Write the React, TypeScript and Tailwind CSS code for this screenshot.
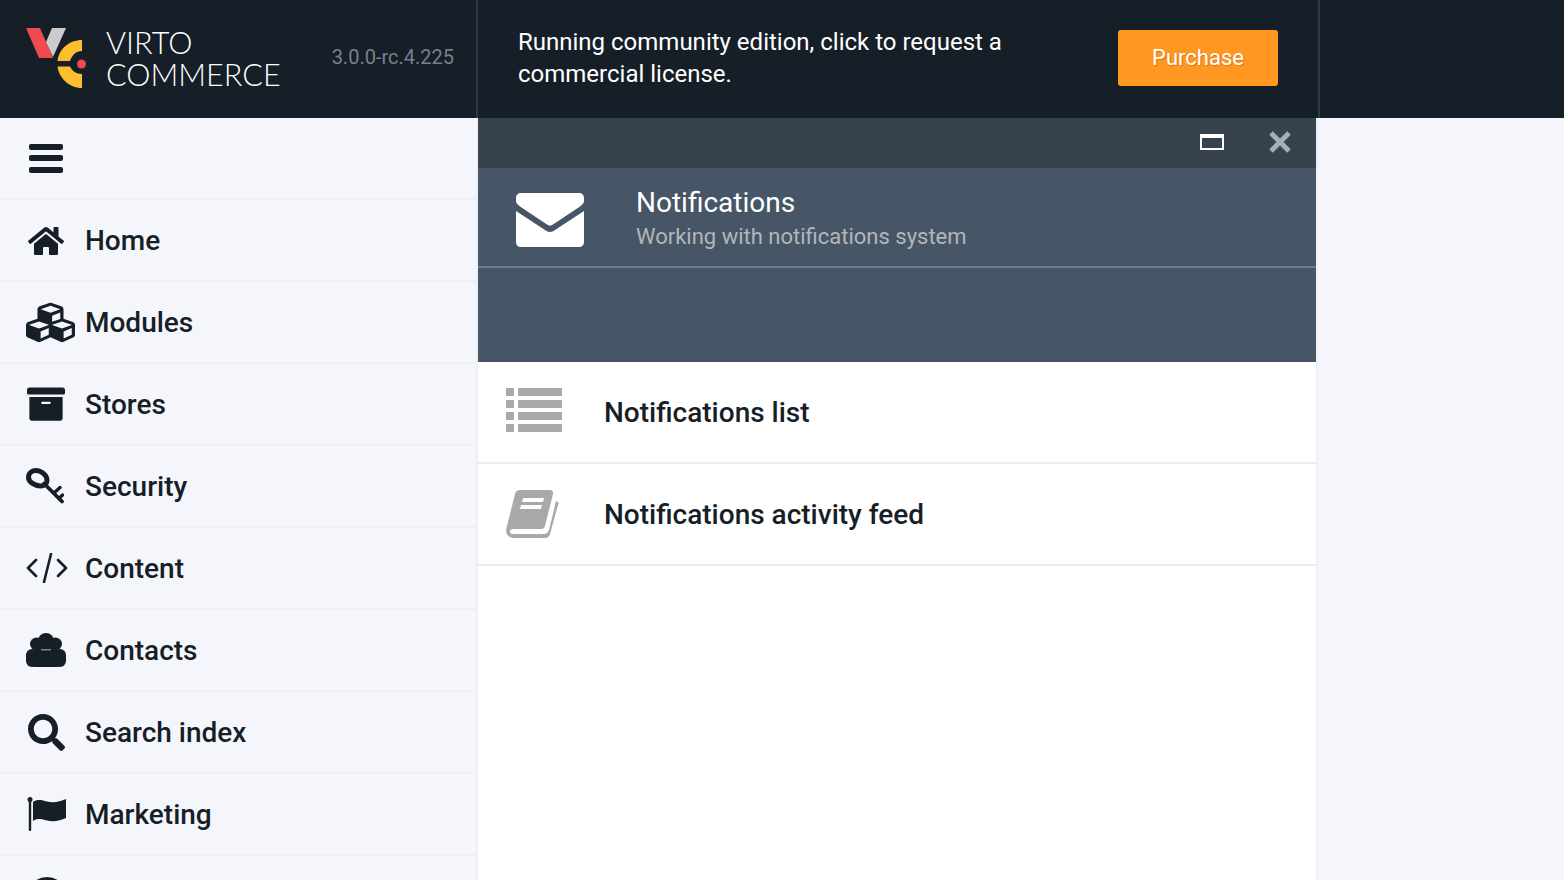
import { FaHome, FaCubes, FaArchive, FaSearch } from "react-icons/fa";
import type { ReactNode } from "react";

const dark = "#161e27";

function Logo() {
  return (
    <svg width="60" height="62" viewBox="0 0 60 62" className="-mr-[2px] shrink-0">
      <path d="M0 0H14L27 30H13Z" fill="#ef4a50" />
      <path d="M26 0H40L27 29L20 14Z" fill="#cbcbcb" />
      <path d="M56 12V23C50 23 46 27 44 33H31.500C33 21 43 12 56 12Z" fill="#fbbe2e" />
      <path d="M31.500 38.500H44C46 43 50 46 56 46V60C43 60 33 50 31.500 38.500Z" fill="#fbbe2e" />
      <circle cx="55.500" cy="36" r="4.500" fill="#ef4a50" />
    </svg>
  );
}

function KeyIcon() {
  return (
    <svg width="38" height="36" viewBox="0 0 38 36" fill="none" stroke={dark} strokeLinecap="round" strokeLinejoin="round">
      <path d="M2.500 9.500C2.500 5 6 2.500 10 2.500C15 2.500 21 7 21 12.500C21 16 18 18 14.500 18C9 18 2.500 14 2.500 9.500Z" strokeWidth="5" />
      <path d="M18 15.500L36 33.500" strokeWidth="3.800" />
      <path d="M28 25L34 19.500M33 30.500L36.500 27" strokeWidth="3.400" />
    </svg>
  );
}

function ContactsIcon() {
  return (
    <svg width="40" height="34" viewBox="0 0 40 34" fill={dark}>
      <circle cx="20" cy="8" r="8" />
      <circle cx="10.500" cy="11" r="6.500" />
      <circle cx="29.500" cy="11" r="6.500" />
      <rect x="8" y="10" width="24" height="7" />
      <rect x="0" y="16" width="12" height="18" rx="6" />
      <rect x="28" y="16" width="12" height="18" rx="6" />
      <rect x="6" y="18" width="28" height="16" rx="3" />
      <rect x="9" y="14" width="22" height="6" />
      <path d="M15 16.800H25" stroke="#f4f6fb" strokeWidth="0.700" />
    </svg>
  );
}

function FlagIcon() {
  return (
    <svg width="40" height="34" viewBox="0 0 40 34" fill={dark} className="ml-[1px]">
      <circle cx="3" cy="2.500" r="2.500" />
      <rect x="1.800" y="3" width="2.400" height="31" rx="1" />
      <path d="M6 5C10 2 15 3 20 4.500C26 6 33 5 39 2V21C33 24 26 25 20 23.500C15 22 10 21 6 24Z" />
    </svg>
  );
}

function CodeIcon() {
  return (
    <svg width="42" height="30" viewBox="0 0 42 30" fill="none" stroke={dark} strokeWidth="2.600" strokeLinecap="round" strokeLinejoin="round">
      <path d="M10 7L2 15L10 23M32 7L40 15L32 23M25 1L18 29" />
    </svg>
  );
}

function EnvelopeIcon() {
  return (
    <svg width="68" height="54" viewBox="0 0 68 54" className="mt-[6px]">
      <path d="M5 0H63C66 0 68 2 68 5V8C68 10 66.500 11.500 64 13.500L37 31.500C35 33 33 33 31 31.500L4 13.500C1.500 11.500 0 10 0 8V5C0 2 2 0 5 0Z" fill="#fff" />
      <path d="M0 18V49C0 52 2 54 5 54H63C66 54 68 52 68 49V18L39 37C36 39.500 32 39.500 29 37Z" fill="#fff" />
    </svg>
  );
}

function ListIcon() {
  return (
    <svg width="56" height="44" viewBox="0 0 56 44" fill="#a9a9a9" className="mb-[4px]">
      {[0, 12, 24, 36].map((y) => (
        <g key={y}>
          <rect x="0" y={y} width="8" height="8" rx="0.500" />
          <rect x="12" y={y} width="44" height="8" rx="0.500" />
        </g>
      ))}
    </svg>
  );
}

function BookIcon() {
  return (
    <svg width="53" height="48" viewBox="0 0 53 48" fill="#a9a9a9">
      <path d="M14 0H44C46.500 0 47.500 2 47 4L39 36C38.500 38 37 39 35 39H7C3 39 3 44 7 44H38C41 44 42 42 43 40L50 11L52 12C52.500 12.500 52.500 13.500 52.300 14L44 44C43.300 46.500 41.500 48 39 48H8C2 48 -1 43 0.500 38L9 4C9.500 1.500 11.500 0 14 0Z" />
      <path d="M17 8H38L37 12H16ZM15 15H36L35 19H14Z" fill="#fff" />
    </svg>
  );
}

function CloseIcon() {
  return (
    <svg width="22" height="22" viewBox="0 0 22 22" stroke="#a9aeb3" strokeWidth="5">
      <path d="M2 2L20 20M20 2L2 20" />
    </svg>
  );
}

const items: [string, ReactNode][] = [
  ["Home", <FaHome size={36} color={dark} className="ml-[2px] mt-[1px]" />],
  ["Modules", <FaCubes preserveAspectRatio="none" color={dark} className="h-[45px] w-[49px]" />],
  ["Stores", <FaArchive size={38} color={dark} className="ml-[1px]" />],
  ["Security", <KeyIcon />],
  ["Content", <CodeIcon />],
  ["Contacts", <ContactsIcon />],
  ["Search index", <FaSearch size={37} color={dark} className="ml-[2px]" />],
  ["Marketing", <FlagIcon />],
];

export default function App() {
  return (
    <div className="flex h-screen w-full flex-col overflow-hidden bg-[#f4f6fb] font-['Roboto',sans-serif]">
      <header className="flex h-[118px] shrink-0 bg-[#161e27]">
        <div className="flex w-[478px] shrink-0 items-center border-r-2 border-[#2b3a4a] pl-[26px] pr-[22px]">
          <Logo />
          <div className="mb-[1px] ml-[22px] font-['Lato',sans-serif] text-[30.6px] leading-[32px] font-light text-white">
            <div>VIRTO</div>
            <div>COMMERCE</div>
          </div>
          <span className="mb-1 ml-auto text-[20px] text-[#76818d]">3.0.0-rc.4.225</span>
        </div>
        <div className="flex w-[842px] shrink-0 items-center justify-between border-r-2 border-[#2b3a4a] pl-10 pr-10">
          <p className="mb-[2px] w-[520px] text-[24px] leading-8 text-white">Running community edition, click to request a commercial license.</p>
          <button className="mb-[2px] h-[56px] w-[160px] rounded-[3px] bg-[#ff9720] pb-[2px] text-[22px] text-white [text-shadow:1px_1px_1px_rgba(0,0,0,0.2)]">Purchase</button>
        </div>
      </header>
      <div className="flex min-h-0 flex-1">
        <nav className="w-[478px] shrink-0 border-r-2 border-[#eef0f6]">
          <div className="flex h-[82px] items-center border-b-2 border-[#eef0f6] pl-[29px]">
            <div className="flex w-[34px] flex-col gap-[5.500px]">
              <span className="h-[6px] rounded-[2px] bg-[#161e27]" />
              <span className="h-[6px] rounded-[2px] bg-[#161e27]" />
              <span className="h-[6px] rounded-[2px] bg-[#161e27]" />
            </div>
          </div>
          {items.map(([label, icon]) => (
            <div key={label} className="flex h-[82px] items-center border-b-2 border-[#eef0f6] pl-[26px]">
              <div className="flex w-[59px] shrink-0 items-center">{icon}</div>
              <span className="pt-[2px] text-[28px] font-medium text-[#161e27]">{label}</span>
            </div>
          ))}
          <div className="flex h-[82px] items-center pl-[26px]">
            <div className="ml-[1px] h-[40px] w-[40px] rounded-full border-[3px] border-[#161e27]" />
          </div>
        </nav>
        <main className="flex w-[840px] shrink-0 flex-col border-r-2 border-[#eef0f6] bg-white">
          <div className="flex h-[50px] shrink-0 items-center justify-end gap-[45px] bg-[#36434f] pb-[2px] pr-[25px]">
            <span className="h-4 w-6 border-2 border-t-[4px] border-white" />
            <CloseIcon />
          </div>
          <div className="h-[194px] shrink-0 bg-[#465666]">
            <div className="flex h-[100px] items-center border-b-2 border-[#6f7d8a] pl-[38px]">
              <EnvelopeIcon />
              <div className="ml-[52px] mt-[2px]">
                <div className="text-[28px] leading-[36px] text-white">Notifications</div>
                <div className="pt-[2px] text-[22px] leading-7 text-[#b3b6b9]">Working with notifications system</div>
              </div>
            </div>
          </div>
          <div className="flex h-[102px] items-center border-b-2 border-[#e9edf0] pl-[28px]">
            <div className="w-[98px] shrink-0"><ListIcon /></div>
            <span className="pt-[2px] text-[28px] font-medium text-[#161e27]">Notifications list</span>
          </div>
          <div className="flex h-[102px] items-center border-b-2 border-[#e9edf0] pl-[28px]">
            <div className="w-[98px] shrink-0"><BookIcon /></div>
            <span className="pt-[2px] text-[28px] font-medium text-[#161e27]">Notifications activity feed</span>
          </div>
        </main>
      </div>
    </div>
  );
}
